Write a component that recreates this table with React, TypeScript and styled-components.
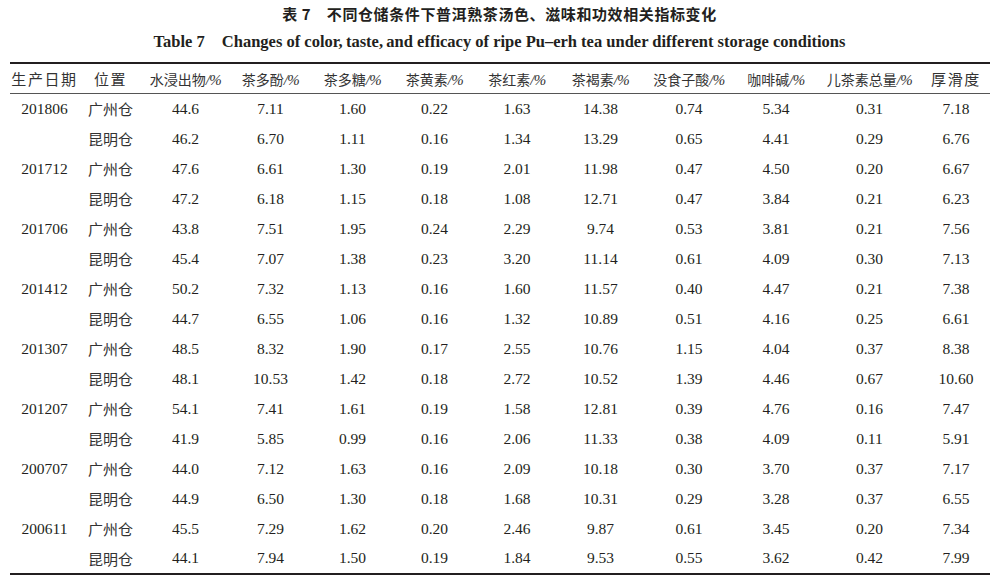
import React from 'react';
import styled, { createGlobalStyle } from 'styled-components';

const GlobalStyle = createGlobalStyle`
  html, body {
    margin: 0;
    padding: 0;
    background: #ffffff;
  }
  body {
    width: 999px;
    height: 582px;
    overflow: hidden;
    color: #231f20;
    font-family: "Liberation Serif", "Noto Sans CJK SC", serif;
  }
`;

const Page = styled.div`
  display: flex;
  flex-direction: column;
  align-items: center;
  width: 999px;
`;

const CaptionCn = styled.div`
  height: 28px;
  line-height: 28px;
  font-family: "Noto Sans CJK SC", sans-serif;
  font-weight: 700;
  font-size: 15px;
  letter-spacing: 0.6px;
  white-space: pre;
`;

const CaptionEn = styled.div`
  height: 28px;
  line-height: 28px;
  font-family: "Liberation Serif", serif;
  font-weight: 700;
  font-size: 16.5px;
  white-space: pre;
`;

const Table = styled.table`
  margin-top: 6px;
  width: 980px;
  table-layout: fixed;
  border-collapse: collapse;
  border-top: 2px solid #231f20;
  border-bottom: 2px solid #231f20;
`;

const HeadCell = styled.th<{ $spaced?: boolean }>`
  height: 29px;
  padding: 0;
  font-weight: 400;
  font-size: ${(p) => (p.$spaced ? '15px' : '14px')};
  letter-spacing: ${(p) => (p.$spaced ? '1.6px' : '0')};
  text-align: center;
  white-space: nowrap;
  border-bottom: 1px solid #555;
  font-family: "Noto Sans CJK SC", sans-serif;
  color: #333;
`;

const Unit = styled.span`
  font-family: "Liberation Serif", serif;
  font-style: italic;
  font-size: 15px;
  letter-spacing: -0.5px;
`;

const Row = styled.tr`
  height: 30px;
`;

const Cell = styled.td<{ $cjk?: boolean }>`
  padding: 0;
  text-align: center;
  white-space: nowrap;
  font-size: ${(p) => (p.$cjk ? '15px' : '15.5px')};
  font-family: ${(p) =>
    p.$cjk ? '"Noto Sans CJK SC", sans-serif' : '"Liberation Serif", serif'};
  color: ${(p) => (p.$cjk ? '#333' : '#231f20')};
`;

const widths = [70, 62, 88, 82, 82, 82, 83, 84, 93, 81, 106, 67];

const headers: { name: string; unit: boolean }[] = [
  { name: '生产日期', unit: false },
  { name: '位置', unit: false },
  { name: '水浸出物', unit: true },
  { name: '茶多酚', unit: true },
  { name: '茶多糖', unit: true },
  { name: '茶黄素', unit: true },
  { name: '茶红素', unit: true },
  { name: '茶褐素', unit: true },
  { name: '没食子酸', unit: true },
  { name: '咖啡碱', unit: true },
  { name: '儿茶素总量', unit: true },
  { name: '厚滑度', unit: false },
];

// [date, gz values, km values]
const data: [string, string[], string[]][] = [
  ['201806',
    ['44.6', '7.11', '1.60', '0.22', '1.63', '14.38', '0.74', '5.34', '0.31', '7.18'],
    ['46.2', '6.70', '1.11', '0.16', '1.34', '13.29', '0.65', '4.41', '0.29', '6.76']],
  ['201712',
    ['47.6', '6.61', '1.30', '0.19', '2.01', '11.98', '0.47', '4.50', '0.20', '6.67'],
    ['47.2', '6.18', '1.15', '0.18', '1.08', '12.71', '0.47', '3.84', '0.21', '6.23']],
  ['201706',
    ['43.8', '7.51', '1.95', '0.24', '2.29', '9.74', '0.53', '3.81', '0.21', '7.56'],
    ['45.4', '7.07', '1.38', '0.23', '3.20', '11.14', '0.61', '4.09', '0.30', '7.13']],
  ['201412',
    ['50.2', '7.32', '1.13', '0.16', '1.60', '11.57', '0.40', '4.47', '0.21', '7.38'],
    ['44.7', '6.55', '1.06', '0.16', '1.32', '10.89', '0.51', '4.16', '0.25', '6.61']],
  ['201307',
    ['48.5', '8.32', '1.90', '0.17', '2.55', '10.76', '1.15', '4.04', '0.37', '8.38'],
    ['48.1', '10.53', '1.42', '0.18', '2.72', '10.52', '1.39', '4.46', '0.67', '10.60']],
  ['201207',
    ['54.1', '7.41', '1.61', '0.19', '1.58', '12.81', '0.39', '4.76', '0.16', '7.47'],
    ['41.9', '5.85', '0.99', '0.16', '2.06', '11.33', '0.38', '4.09', '0.11', '5.91']],
  ['200707',
    ['44.0', '7.12', '1.63', '0.16', '2.09', '10.18', '0.30', '3.70', '0.37', '7.17'],
    ['44.9', '6.50', '1.30', '0.18', '1.68', '10.31', '0.29', '3.28', '0.37', '6.55']],
  ['200611',
    ['45.5', '7.29', '1.62', '0.20', '2.46', '9.87', '0.61', '3.45', '0.20', '7.34'],
    ['44.1', '7.94', '1.50', '0.19', '1.84', '9.53', '0.55', '3.62', '0.42', '7.99']],
];

function DataRow({ date, place, values }: { date: string; place: string; values: string[] }) {
  return (
    <Row>
      <Cell>{date}</Cell>
      <Cell $cjk>{place}</Cell>
      {values.map((v, i) => (
        <Cell key={i}>{v}</Cell>
      ))}
    </Row>
  );
}

export default function App() {
  return (
    <>
      <GlobalStyle />
      <Page>
        <CaptionCn>{'表 7　不同仓储条件下普洱熟茶汤色、滋味和功效相关指标变化'}</CaptionCn>
        <CaptionEn>
          {'Table 7　Changes of color,\u2009taste,\u2009and efficacy of ripe Pu–erh tea under different storage conditions'}
        </CaptionEn>
        <Table>
          <colgroup>
            {widths.map((w, i) => (
              <col key={i} style={{ width: w }} />
            ))}
          </colgroup>
          <thead>
            <tr>
              {headers.map((h) => (
                <HeadCell key={h.name} $spaced={!h.unit}>
                  {h.name}
                  {h.unit && <Unit>/%</Unit>}
                </HeadCell>
              ))}
            </tr>
          </thead>
          <tbody>
            {data.map(([date, gz, km]) => (
              <React.Fragment key={date}>
                <DataRow date={date} place="广州仓" values={gz} />
                <DataRow date="" place="昆明仓" values={km} />
              </React.Fragment>
            ))}
          </tbody>
        </Table>
      </Page>
    </>
  );
}
